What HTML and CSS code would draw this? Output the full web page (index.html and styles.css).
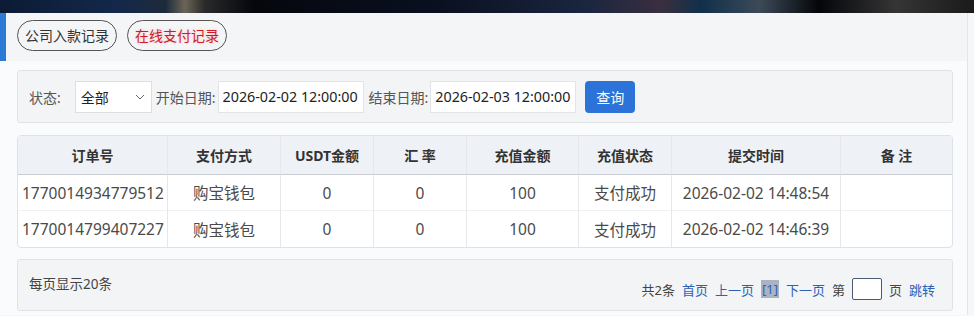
FILE: index.html
```
<html>

<head>
    <title>在线支付记录</title>
    <link rel="stylesheet" href="styles.css">
</head>

<body>
    <div class="topbar"></div>
    <div class="page">
        <div class="tabs">
            <a class="tab">公司入款记录</a>
            <a class="tab tab-on">在线支付记录</a>
        </div>
        <div class="content">
            <form class="filter">
                <label class="lbl lbl-state">状态:</label>
                <div class="select">
                    <span>全部</span>
                    <svg width="10" height="6" viewBox="0 0 10 6"><path d="M1 1 L5 5 L9 1" fill="none" stroke="#666" stroke-width="1"/></svg>
                </div>
                <label class="lbl">开始日期:</label>
                <input class="date" value="2026-02-02 12:00:00">
                <label class="lbl">结束日期:</label>
                <input class="date" value="2026-02-03 12:00:00">
                <button type="button" class="btn">查询</button>
            </form>

            <table class="grid">
                <thead>
                    <tr>
                        <th class="c1">订单号</th>
                        <th class="c2">支付方式</th>
                        <th class="c3">USDT金额</th>
                        <th class="c4">汇 率</th>
                        <th class="c5">充值金额</th>
                        <th class="c6">充值状态</th>
                        <th class="c7">提交时间</th>
                        <th class="c8">备 注</th>
                    </tr>
                </thead>
                <tbody>
                    <tr>
                        <td class="left">1770014934779512</td>
                        <td>购宝钱包</td>
                        <td>0</td>
                        <td>0</td>
                        <td>100</td>
                        <td>支付成功</td>
                        <td>2026-02-02 14:48:54</td>
                        <td></td>
                    </tr>
                    <tr>
                        <td class="left">1770014799407227</td>
                        <td>购宝钱包</td>
                        <td>0</td>
                        <td>0</td>
                        <td>100</td>
                        <td>支付成功</td>
                        <td>2026-02-02 14:46:39</td>
                        <td></td>
                    </tr>
                </tbody>
            </table>

            <div class="pager">
                <span class="per">每页显示20条</span>
                <div class="pages">
                    <span>共2条</span>
                    <a>首页</a>
                    <a>上一页</a>
                    <span class="cur">[1]</span>
                    <a>下一页</a>
                    <span>第</span>
                    <input class="go">
                    <span>页</span>
                    <a>跳转</a>
                </div>
            </div>
        </div>
    </div>
</body>

</html>
```

FILE: styles.css
```
body {
    margin: 0;
    background: #f6f7f9;
    color: #444;
    font-family: "Noto Sans", "Noto Sans CJK SC", sans-serif;
    font-size: 14px;
    overflow: hidden;
}

.topbar {
    height: 13px;
    background: linear-gradient(90deg, #0c1b34 0%, #13284a 12%, #1d2a3c 17%, #6b6556 19%, #2a2a2a 21%, #05070d 26%, #0a1020 45%, #1a2540 60%, #3a2f3f 68%, #10304a 72%, #3c4a58 78%, #05060a 84%, #353535 92%, #1a1a1a 100%);
}

.page {
    position: relative;
    margin-right: 6px;
    border-right: 1px solid #e3e5e8;
    background: #f6f7f9;
}

.page:before {
    position: absolute;
    top: 0;
    left: 0;
    content: "";
    width: 6px;
    height: 48px;
    background: #2b7bd6;
}

.tabs {
    display: flex;
    gap: 10px;
    height: 48px;
    padding: 7px 0 0 17px;
    box-sizing: border-box;
    background: #f4f5f7;
}

.tab {
    display: inline-block;
    box-sizing: border-box;
    width: 100px;
    height: 31px;
    line-height: 29px;
    text-align: center;
    border: 1px solid #555;
    border-radius: 16px;
    color: #333;
    font-size: 14px;
}

.tab-on {
    color: #cf1b22;
    text-shadow: 0 0 3px #f7c3c6;
}

.content {
    padding: 9px 14px 4px 17px;
    background: #fafbfc;
}

.filter {
    display: flex;
    align-items: center;
    height: 53px;
    margin: 0 0 12px;
    padding: 0 0 0 11px;
    box-sizing: border-box;
    background: #f3f4f6;
    border: 1px solid #e0e2e6;
    border-radius: 3px;
}

.lbl {
    color: #555;
    font-size: 14px;
    margin-right: 2px;
}

.lbl-state {
    margin-right: 14px;
}

.select {
    display: flex;
    align-items: center;
    justify-content: space-between;
    box-sizing: border-box;
    width: 77px;
    height: 32px;
    padding: 0 6px 0 5px;
    margin-right: 4px;
    background: #fff;
    border: 1px solid #dcdee2;
    color: #222;
    font-size: 14px;
}

.date {
    box-sizing: border-box;
    width: 146px;
    height: 32px;
    padding: 0 4px;
    margin-right: 5px;
    border: 1px solid #e2e4e8;
    background: #fff;
    color: #222;
    font-family: inherit;
    font-size: 14.3px;
}

.btn {
    width: 50px;
    height: 32px;
    margin-left: 4px;
    border: 0;
    border-radius: 4px;
    background: #2b73d9;
    color: #fff;
    font-family: inherit;
    font-size: 14px;
}

.grid {
    width: 100%;
    border-collapse: separate;
    border-spacing: 0;
    border: 1px solid #dfe1e5;
    border-radius: 4px;
    background: #fff;
    font-size: 15.5px;
}

.grid th,
.grid td {
    text-align: center;
    border-left: 1px solid #e6e7ea;
    padding: 0;
}

.grid th:first-child,
.grid td:first-child {
    border-left: 0;
}

.grid th {
    height: 39px;
    background: #eef1f5;
    border-bottom: 1px solid #c9ccd2;
    color: #333;
    font-weight: bold;
    font-size: 14px;
}

.grid td {
    height: 36px;
    color: #4a4a4a;
}

.grid tbody tr:first-child td {
    border-bottom: 1px solid #f0f1f3;
}

.grid td.left {
    text-align: left;
    padding-left: 4px;
}

.c1 { width: 149px; }
.c2 { width: 112px; }
.c3 { width: 92px; }
.c4 { width: 92px; }
.c5 { width: 111px; }
.c6 { width: 92px; }
.c7 { width: 168px; }

.pager {
    display: flex;
    align-items: center;
    justify-content: space-between;
    height: 52px;
    margin-top: 11px;
    padding: 0 17px 0 11px;
    box-sizing: border-box;
    background: #f3f4f6;
    border: 1px solid #e0e2e6;
    border-radius: 3px;
    font-size: 13px;
}

.per {
    color: #444;
    font-size: 13.5px;
    margin-top: -4px;
}

.pages {
    display: flex;
    align-items: center;
    gap: 7px;
    margin-top: 8px;
    color: #444;
}

.pages a {
    color: #2b62b8;
}

.cur {
    background: #a9b3c4;
    color: #2b62b8;
    padding: 0 1px;
}

.go {
    box-sizing: border-box;
    width: 30px;
    height: 22px;
    border: 1px solid #4a5a72;
    border-radius: 2px;
    background: #fff;
}
```
